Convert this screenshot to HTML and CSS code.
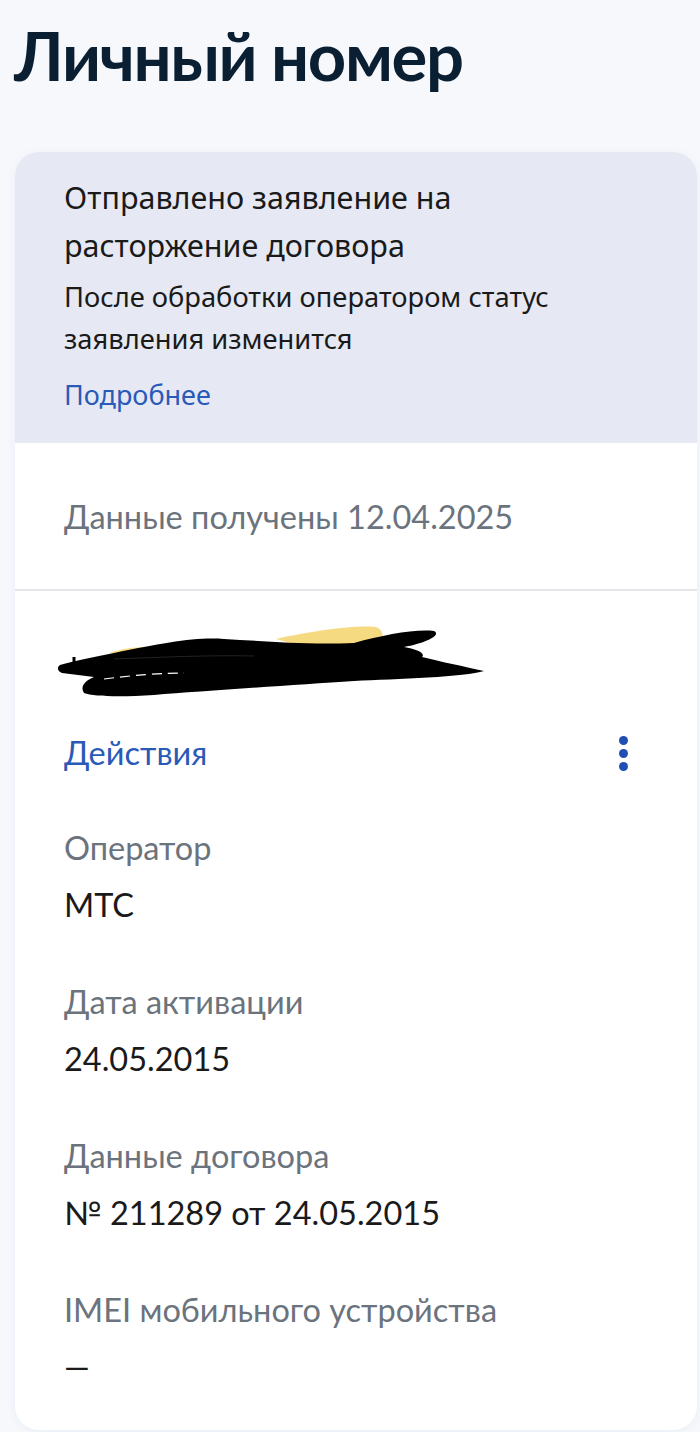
FILE: index.html
```html
<!DOCTYPE html>
<html lang="ru">
<head>
<meta charset="utf-8">
<title>Личный номер</title>
<link rel="stylesheet" href="styles.css">
</head>
<body>
<h1 class="title">Личный номер</h1>
<div class="card">
  <div class="notice">
    <p class="notice-title">Отправлено заявление на расторжение договора</p>
    <p class="notice-text">После обработки оператором статус заявления изменится</p>
    <a class="link notice-link" href="#">Подробнее</a>
  </div>
  <div class="received">Данные получены 12.04.2025</div>
  <div class="details">
    <div class="redacted">
      <svg width="440" height="80" viewBox="0 0 440 80">
        <path d="M222 22 C258 14 300 8 322 10 C332 14 330 26 320 30 L250 30 Z" fill="#f5d36b" opacity="0.85"/>
        <path d="M55 36 C66 32 80 30 92 30 L92 38 Z" fill="#f5d36b" opacity="0.8"/>
        <path d="M6 48 C20 44 40 40 60 36 C110 26 140 20 170 22 C210 24 250 28 300 26 C330 18 360 12 380 14 C388 18 372 26 350 30 C362 32 372 36 368 40 C384 44 412 50 430 54 C412 60 342 62 300 64 C240 68 150 74 100 78 C70 80 40 80 30 76 C26 70 30 64 40 60 L8 56 C3 54 3 50 6 48 Z" fill="#000"/>
        <path d="M50 62 C80 58 110 56 130 56" stroke="#fff" stroke-width="1.2" fill="none" stroke-dasharray="10 6"/>
        <path d="M60 42 C110 40 160 38 200 39" stroke="#222" stroke-width="1" fill="none"/>
        <path d="M20 40 L20 56" stroke="#000" stroke-width="3"/>
      </svg>
    </div>
    <div class="actions">
      <a class="link actions-link" href="#">Действия</a>
      <span class="dots" aria-label="Меню"><i></i><i></i><i></i></span>
    </div>
    <dl class="fields">
      <div class="field"><dt>Оператор</dt><dd>МТС</dd></div>
      <div class="field"><dt>Дата активации</dt><dd>24.05.2015</dd></div>
      <div class="field"><dt>Данные договора</dt><dd>№ 211289 от 24.05.2015</dd></div>
      <div class="field"><dt>IMEI мобильного устройства</dt><dd>—</dd></div>
    </dl>
  </div>
</div>
</body>
</html>
```
FILE: styles.css
```css
* { box-sizing: border-box; }
html, body { margin: 0; padding: 0; }
body {
  background: #f6f8fc;
  font-family: Lato, "Noto Sans", sans-serif;
  width: 700px;
  height: 1432px;
  overflow: hidden;
}
.title {
  margin: 0;
  padding: 15px 0 0 14px;
  font-size: 67px;
  line-height: 1.2;
  font-weight: 700;
  color: #0b1f33;
  letter-spacing: -1.4px;
}
.card {
  margin: 57px 3px 0 15px;
  background: #fff;
  border-radius: 24px;
  overflow: hidden;
  box-shadow: 0 2px 10px rgba(40, 60, 120, 0.06);
  height: 1278px;
}
.notice {
  background: #e6e9f3;
  padding: 21px 40px 26px 49px;
  height: 291px;
  font-family: "Noto Sans", Lato, sans-serif;
}
.notice p { margin: 0; }
.notice-title {
  font-size: 30.5px;
  line-height: 48px;
  color: #1a1a1a;
  max-width: 520px;
}
.notice-text {
  margin-top: 7px !important;
  font-size: 27.3px;
  line-height: 42px;
  color: #1a1a1a;
  max-width: 520px;
}
.link {
  color: #2a5ab8;
  text-decoration: none;
}
.notice-link {
  display: block;
  margin-top: 15px;
  font-size: 27px;
  line-height: 40px;
}
.received {
  padding: 0 49px;
  height: 148px;
  display: flex;
  align-items: center;
  font-size: 32.5px;
  color: #6b737d;
  border-bottom: 2px solid #e3e5e9;
}
.details {
  padding: 26px 20px 40px 49px;
}
.redacted {
  height: 82px;
  margin-left: -10px;
}
.redacted svg { display: block; }
.actions {
  display: flex;
  align-items: center;
  justify-content: space-between;
  margin-top: 34px;
  padding-right: 49px;
}
.actions-link {
  font-size: 32.5px;
  line-height: 40px;
}
.dots {
  display: flex;
  flex-direction: column;
  gap: 4px;
}
.dots i {
  display: block;
  width: 9px;
  height: 9px;
  border-radius: 50%;
  background: #1f4fb5;
}
.fields {
  margin: 55px 0 0 0;
  display: flex;
  flex-direction: column;
  gap: 57px;
}
.field dt {
  font-size: 32.5px;
  line-height: 40px;
  color: #6b737d;
}
.field dd {
  margin: 17px 0 0 0;
  font-size: 32.5px;
  line-height: 40px;
  color: #1a1a1a;
}
```
